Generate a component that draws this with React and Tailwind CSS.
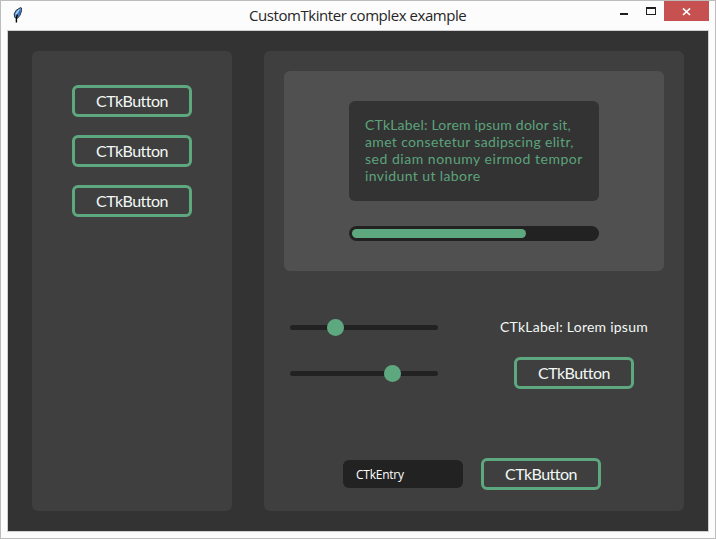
import React from 'react';

function Button() {
  return (
    <div className="flex h-8 w-[120px] shrink-0 items-center justify-center rounded-[6px] border-[3px] border-[#5ea880] font-['Lato'] text-[16px] leading-none tracking-[-0.52px] text-[#f2f8f5]">
      <span className="whitespace-nowrap">CTkButton</span>
    </div>
  );
}

function Slider({ knob }) {
  return (
    <div className="flex h-[17px] w-[148px] items-center">
      <div className="h-[5px] rounded-l-full bg-[#222]" style={{ width: knob }} />
      <div className="size-[17px] shrink-0 rounded-full bg-[#5ea880]" />
      <div className="h-[5px] flex-1 rounded-r-full bg-[#222]" />
    </div>
  );
}

function Feather() {
  return (
    <svg width="10" height="18" viewBox="0 0 10 18" className="block">
      <path d="M7.5 1.6 8.5 2 8.2 6 6.8 9.5 4.5 12.3 1.8 11.5 1.2 8 3 4.5Z" fill="#5c98dc" stroke="#26303e" strokeWidth="1" />
      <path d="M6.3 3.5 2.7 8.5" stroke="#c0def5" strokeWidth="1.1" />
      <path d="M7 4.5 5.4 9.5" stroke="#2f68b8" strokeWidth="1.2" />
      <path d="M4.4 8.5 3.4 12 3.4 16.5" fill="none" stroke="#000" strokeWidth="1.4" />
    </svg>
  );
}

export default function App() {
  return (
    <div className="flex h-[539px] w-[716px] flex-col overflow-hidden border border-[#bcbcbc] bg-[#fcfcfc] px-1.5 font-['Lato',sans-serif]">
      <header className="flex h-[29px] shrink-0 items-start">
        <div className="ml-1.5 mt-[5px] w-[229px]">
          <Feather />
        </div>
        <h1 className="mt-1 w-[230px] whitespace-nowrap pl-[7px] font-['Open_Sans'] text-[15px] leading-5 tracking-[-0.44px] text-[#262626]">
          CustomTkinter complex example
        </h1>
        <div className="ml-auto flex">
          <svg width="44" height="20" viewBox="0 0 44 20" shapeRendering="crispEdges">
            <path d="M0 12h8v2H0z" fill="#1e1e1e" />
            <path d="M26 6h10v8H26zM27 8v5h8V8z" fill="#1e1e1e" fillRule="evenodd" />
          </svg>
          <div className="flex h-5 w-[45px] items-center justify-center bg-[#c75050]">
            <svg width="9" height="8" viewBox="0 0 9 8" className="mt-[2px]">
              <path d="M1 .5 8 7M8 .5 1 7" stroke="#fff" strokeWidth="1.7" />
            </svg>
          </div>
        </div>
      </header>
      <main className="flex h-[502px] w-[702px] shrink-0 gap-8 border border-[#d0d0d0] bg-[#333] px-6 py-5">
        <aside className="flex h-[460px] w-[200px] shrink-0 flex-col items-center gap-[18px] rounded-[6px] bg-[#3f3f3f] pt-[34px]">
          <Button />
          <Button />
          <Button />
        </aside>
        <section className="h-[460px] w-[420px] shrink-0 rounded-[6px] bg-[#3f3f3f] p-5">
          <div className="flex h-[200px] flex-col items-center rounded-[6px] bg-[#505050] pt-[30px]">
            <div className="h-[100px] w-[250px] whitespace-nowrap rounded-[6px] bg-[#333] pl-4 pt-[15px] text-[14px] leading-[17px] text-[#5ba37c]">
              <p className="tracking-[0.2px]">CTkLabel: Lorem ipsum dolor sit,</p>
              <p className="tracking-[0.35px]">amet consetetur sadipscing elitr,</p>
              <p className="tracking-[0.52px]">sed diam nonumy eirmod tempor</p>
              <p className="tracking-[0.4px]">invidunt ut labore</p>
            </div>
            <div className="mt-[25px] h-[15px] w-[250px] rounded-full bg-[#222] p-[3px]">
              <div className="h-[9px] w-[174px] rounded-full bg-[#5ea880]" />
            </div>
          </div>
          <div className="mt-12 flex h-[70px] justify-between pl-1.5">
            <div className="flex flex-col gap-[29px]">
              <Slider knob={37} />
              <Slider knob={94} />
            </div>
            <div className="flex w-[180px] flex-col items-center">
              <p className="h-[17px] whitespace-nowrap text-[14px] leading-[15px] tracking-[0.24px] text-[#f2f8f5]">CTkLabel: Lorem ipsum</p>
              <div className="mt-[21px]">
                <Button />
              </div>
            </div>
          </div>
          <div className="mt-[69px] flex items-center gap-[18px] pl-[59px]">
            <div className="flex h-7 w-[120px] items-center rounded-[6px] bg-[#222] pl-[13px] font-['Open_Sans'] text-[12px] leading-none tracking-[-0.25px] text-white">
              <span className="mt-[2px]">CTkEntry</span>
            </div>
            <Button />
          </div>
        </section>
      </main>
    </div>
  );
}
